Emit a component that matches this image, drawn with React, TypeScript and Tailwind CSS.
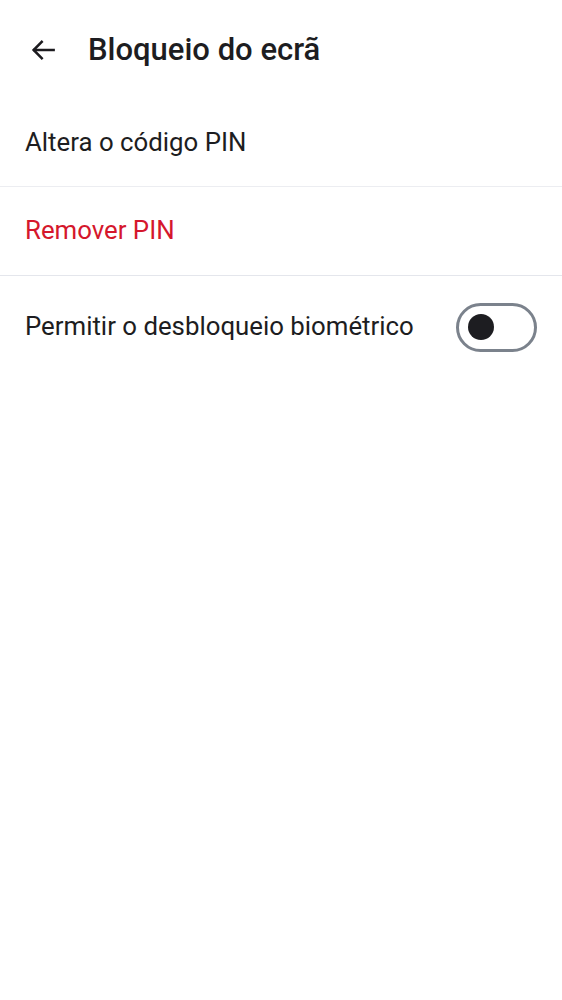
import { useState } from "react";

function BackArrow() {
  return (
    <svg width="30" height="30" viewBox="0 0 24 24" fill="none" stroke="#1c1b1f" strokeWidth="2" strokeLinecap="square">
      <path d="M20.5 12H5" />
      <path d="M11 5.5L4.5 12l6.5 6.5" />
    </svg>
  );
}

export default function App() {
  const [bio, setBio] = useState(false);

  return (
    <div className="min-h-[1000px] w-full bg-white text-[#1d1d21]" style={{ fontFamily: "Roboto, 'Noto Sans', sans-serif" }}>
      <header className="flex h-[99px] items-center px-[28px]">
        <button className="flex h-[30px] w-[30px] items-center justify-center">
          <BackArrow />
        </button>
        <h1 className="ml-[30px] text-[31px] font-medium leading-none">Bloqueio do ecrã</h1>
      </header>

      <div className="flex h-[88px] items-center border-b border-[#ecedf1] px-[25px]">
        <span className="text-[25.8px] leading-none">Altera o código PIN</span>
      </div>

      <div className="flex h-[89px] items-center border-b border-[#e4e6ec] px-[25px]">
        <span className="text-[25.8px] leading-none text-[#d5172c]">Remover PIN</span>
      </div>

      <div className="flex h-[102px] items-center justify-between pl-[25px] pr-[25px]">
        <span className="text-[25.8px] leading-none">Permitir o desbloqueio biométrico</span>
        <button
          onClick={() => setBio(!bio)}
          className="flex h-[49px] w-[81px] items-center rounded-full border-[3px] border-[#7b828c] px-[9px]"
        >
          <span className="h-[26px] w-[26px] rounded-full bg-[#1d1d21]" />
        </button>
      </div>
    </div>
  );
}
